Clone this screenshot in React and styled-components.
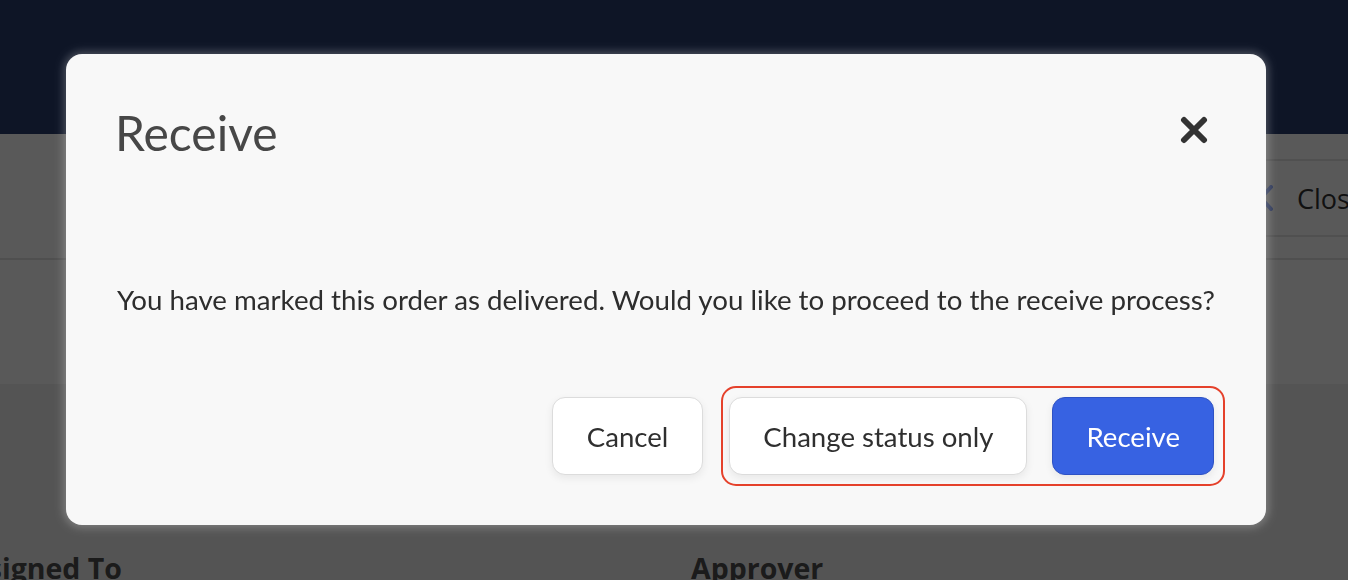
import React from "react";
import styled, { createGlobalStyle } from "styled-components";

const Global = createGlobalStyle`
  html, body { margin: 0; padding: 0; }
  body {
    width: 1348px;
    height: 580px;
    overflow: hidden;
    background: #f1f1f1;
    font-family: "Lato", "Open Sans", sans-serif;
  }
`;

const Page = styled.div`
  height: 580px;
  display: flex;
  flex-direction: column;
  overflow: hidden;
  font-family: "Open Sans", sans-serif;
`;

const TopBar = styled.header`
  height: 134px;
  flex: none;
  background: #283c6d;
`;

const Toolbar = styled.div`
  height: 126px;
  flex: none;
  background: #fff;
  border-bottom: 2px solid #e2e2e2;
  box-sizing: border-box;
  display: flex;
  justify-content: flex-end;
  align-items: flex-start;
  padding-top: 25px;
  overflow: hidden;
`;

const BackButton = styled.button`
  display: flex;
  align-items: center;
  gap: 24px;
  height: 78px;
  padding: 0 24px 0 30px;
  margin-right: -43px;
  background: #fff;
  border: 2px solid #e6e6e6;
  border-radius: 10px;
  box-sizing: border-box;
  font-family: "Open Sans", sans-serif;
  font-size: 27px;
  color: #333;
`;

const InfoBand = styled.div`
  height: 124px;
  flex: none;
  background: #fff;
`;

const Details = styled.section`
  flex: 1;
  background: #f1f1f1;
  display: grid;
  grid-template-columns: 691px 1fr;
  align-items: end;
`;

const Label = styled.div`
  font-family: "Open Sans", sans-serif;
  font-weight: 700;
  font-size: 28.5px;
  color: #4d4d4d;
  margin-bottom: -7px;
  white-space: nowrap;
  ${(p) => (p.$shift ? `margin-left: ${p.$shift}px;` : "")}
`;

const Overlay = styled.div`
  position: fixed;
  inset: 0;
  background: rgba(0, 0, 0, 0.65);
  display: flex;
  align-items: flex-start;
  justify-content: flex-start;
  padding: 54px 0 0 66px;
`;

const Modal = styled.div`
  width: 1200px;
  height: 471px;
  box-sizing: border-box;
  background: #f8f8f8;
  border-radius: 16px;
  box-shadow: 0 0 10px 2px rgba(255, 255, 255, 0.28);
  padding: 50px 41px 39px 51px;
  display: flex;
  flex-direction: column;
  font-family: "Lato", sans-serif;
`;

const ModalHeader = styled.div`
  display: flex;
  justify-content: space-between;
  align-items: flex-start;
`;

const Title = styled.h2`
  margin: 0 0 0 -2px;
  font-family: "Lato", sans-serif;
  font-weight: 400;
  font-size: 48px;
  line-height: 1.2;
  color: #474747;
`;

const CloseX = styled.button`
  margin: 12px 17px 0 0;
  padding: 0;
  width: 28px;
  height: 28px;
  border: none;
  background: none;
  display: flex;
  cursor: pointer;
`;

const Message = styled.p`
  margin: 121px 0 0;
  font-size: 27.7px;
  line-height: 1.2;
  color: #2d2d2d;
  white-space: nowrap;
`;

const Footer = styled.div`
  margin-top: auto;
  display: flex;
  justify-content: flex-end;
  align-items: center;
  gap: 18px;
`;

const Highlight = styled.div`
  display: flex;
  gap: 25px;
  padding: 9px 9px 9px 6px;
  border: 2px solid #e5412b;
  border-radius: 15px;
`;

const Button = styled.button`
  height: 78px;
  box-sizing: border-box;
  padding: 0 ${(p) => p.$px}px;
  border-radius: 13px;
  font-family: "Lato", sans-serif;
  font-size: 27.6px;
  cursor: pointer;
  border: 1px solid ${(p) => (p.$primary ? "#2e52c4" : "#dcdcdc")};
  background: ${(p) => (p.$primary ? "#3762e2" : "#ffffff")};
  color: ${(p) => (p.$primary ? "#ffffff" : "#2f2f2f")};
  box-shadow: 0 3px 8px rgba(0, 0, 0, 0.07);
`;

const XIcon = () => (
  <svg width="28" height="28" viewBox="0 0 28 28" fill="none">
    <path
      d="M4 4 L24 24 M24 4 L4 24"
      stroke="#333"
      strokeWidth="6"
      strokeLinecap="round"
    />
  </svg>
);

const Chevron = () => (
  <svg width="15" height="26" viewBox="0 0 15 26" fill="none">
    <path
      d="M13 2 L3 13 L13 24"
      stroke="#8aa6ff"
      strokeWidth="4"
      strokeLinecap="round"
      strokeLinejoin="round"
    />
  </svg>
);

export default function App() {
  return (
    <>
      <Global />
      <Page>
        <TopBar />
        <Toolbar>
          <BackButton>
            <Chevron />
            Close
          </BackButton>
        </Toolbar>
        <InfoBand />
        <Details>
          <Label $shift={-46}>Assigned To</Label>
          <Label>Approver</Label>
        </Details>
      </Page>
      <Overlay>
        <Modal role="dialog" aria-modal="true">
          <ModalHeader>
            <Title>Receive</Title>
            <CloseX aria-label="Close">
              <XIcon />
            </CloseX>
          </ModalHeader>
          <Message>
            You have marked this order as delivered. Would you like to proceed
            to the receive process?
          </Message>
          <Footer>
            <Button $px={34}>Cancel</Button>
            <Highlight>
              <Button $px={33}>Change status only</Button>
              <Button $primary $px={33}>
                Receive
              </Button>
            </Highlight>
          </Footer>
        </Modal>
      </Overlay>
    </>
  );
}
